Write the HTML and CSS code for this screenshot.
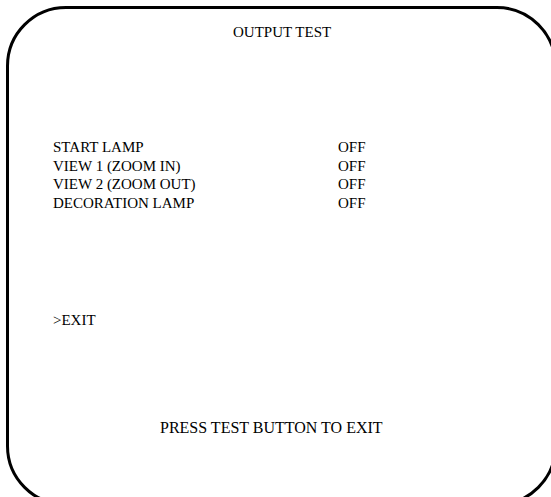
FILE: index.html
```html
<!DOCTYPE html>
<html lang="en">
<head>
    <meta charset="UTF-8">
    <meta name="viewport" content="width=device-width, initial-scale=1.0">
    <title>Output Test</title>
    <link rel="stylesheet" href="styles.css">
</head>
<body>
    <div class="screen">
        <div class="title">OUTPUT TEST</div>

        <div class="outputs">
            <div class="label">START LAMP</div><div class="state">OFF</div>
            <div class="label">VIEW 1 (ZOOM IN)</div><div class="state">OFF</div>
            <div class="label">VIEW 2 (ZOOM OUT)</div><div class="state">OFF</div>
            <div class="label">DECORATION LAMP</div><div class="state">OFF</div>
        </div>

        <div class="exit">&gt;EXIT</div>

        <div class="footer">PRESS TEST BUTTON TO EXIT</div>
    </div>
</body>
</html>
```

FILE: styles.css
```css
html, body {
    margin: 0;
    padding: 0;
    background-color: #fff;
    overflow: hidden;
}
body {
    font-family: "Liberation Serif", "Times New Roman", serif;
    font-size: 15px;
    line-height: 18.4px;
    color: #000;
}
.screen {
    box-sizing: border-box;
    margin: 6px;
    width: 551px;
    height: 500px;
    border: 3px solid #000;
    border-radius: 60px;
    padding-top: 14px;
}
.title {
    padding-left: 224px;
}
.outputs {
    display: grid;
    grid-template-columns: 285px auto;
    margin-top: 97px;
    padding-left: 44px;
}
.exit {
    margin-top: 99px;
    padding-left: 44px;
}
.footer {
    margin-top: 90px;
    padding-left: 151px;
    font-size: 16px; /* a bit bigger than the rest */
}
```
